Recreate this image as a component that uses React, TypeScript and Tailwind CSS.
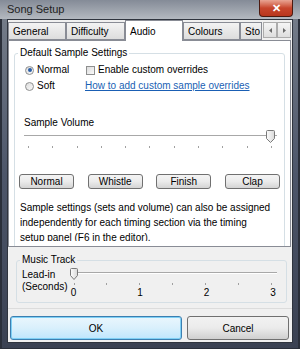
import React from 'react';

const Thumb = ({ w = 9, h = 13 }: { w?: number; h?: number }) => (
  <svg width={w} height={h} viewBox={`0 0 ${w} ${h}`}>
    <defs>
      <linearGradient id="thumbFill" x1="0" y1="0" x2="1" y2="0">
        <stop offset="0" stopColor="#fdfdfd" />
        <stop offset="1" stopColor="#d8d8d8" />
      </linearGradient>
    </defs>
    <path
      d={`M1.5 0.5H${w - 1.5}Q${w - 0.5} 0.5 ${w - 0.5} 1.5V${h - 4.5}L${w / 2} ${h - 0.5}L0.5 ${h - 4.5}V1.5Q0.5 0.5 1.5 0.5Z`}
      fill="url(#thumbFill)"
      stroke="#7a7a7a"
    />
  </svg>
);

const SmallButton = ({ label }: { label: string }) => (
  <button className="h-[15px] w-[55px] rounded-[3px] border border-[#707070] bg-gradient-to-b from-[#f4f4f4] via-[#ebebeb] to-[#d4d4d4] text-[10px] leading-none text-black">
    {label}
  </button>
);

const Radio = ({ checked }: { checked?: boolean }) => (
  <span className="flex h-[9px] w-[9px] items-center justify-center rounded-full border border-[#8e8f8f] bg-gradient-to-br from-[#dcdcdc] to-[#fafafa]">
    {checked && <span className="h-[4px] w-[4px] rounded-full bg-[#2b5fa8]" />}
  </span>
);

const tabs = [
  { label: 'General', w: 'w-[58px]' },
  { label: 'Difficulty', w: 'w-[59px]' },
  { label: 'Audio', w: 'w-[58px]', active: true },
  { label: 'Colours', w: 'w-[57px]' },
  { label: 'Sto', w: 'w-[22px]' },
];

export default function App() {
  return (
    <div className="flex h-[349px] w-[300px] flex-col overflow-hidden bg-gradient-to-b from-[#78808c] via-[#4d566a] to-[#3a4152] font-['Liberation_Sans',Arial,sans-serif] text-black shadow-[inset_2px_0_0_#2a2f3a,inset_-2px_0_0_#2a2f3a,inset_0_-1px_0_#2a2f3a]">
      {/* title bar */}
      <div className="flex h-[19px] shrink-0 items-start justify-between bg-gradient-to-b from-[#848b97] to-[#b4b9c0]">
        <span className="pl-[7px] pt-[4px] text-[11px] leading-none text-[#1e1e1e]">Song Setup</span>
        <div className="mr-[7px] flex h-[17px] w-[34px] items-center justify-center rounded-b-[4px] border border-t-0 border-[#4c1a10] bg-gradient-to-b from-[#e8a493] via-[#c7452c] to-[#b8361d] text-[11px] font-bold leading-none text-white">
          ✕
        </div>
      </div>

      {/* client area */}
      <div className="mx-[7px] mb-[6px] flex flex-1 flex-col border border-[#2f343e] bg-[#f0f0f0]">
        {/* tab strip */}
        <div className="flex h-[20px] items-end">
          {tabs.map((t) =>
            t.active ? (
              <div
                key={t.label}
                className={`${t.w} relative z-10 -mb-px flex h-[21px] items-center border border-b-0 border-[#898c95] bg-white pl-[4px] text-[10px]`}
              >
                {t.label}
              </div>
            ) : (
              <div
                key={t.label}
                className={`${t.w} flex h-[18px] items-center border border-[#898c95] bg-gradient-to-b from-[#f3f3f3] to-[#dddddd] pl-[4px] text-[10px]`}
              >
                {t.label}
              </div>
            )
          )}
          <div className="ml-[1px] flex h-[16px] self-center">
            {['M4 1L1 3.5L4 6Z', 'M1 1L4 3.5L1 6Z'].map((d) => (
              <div
                key={d}
                className="flex w-[14px] items-center justify-center border border-[#acacac] bg-gradient-to-b from-[#f5f5f5] to-[#dedede]"
              >
                <svg width="5" height="7" viewBox="0 0 5 7">
                  <path d={d} fill="#6a6a6a" />
                </svg>
              </div>
            ))}
          </div>
        </div>

        {/* tab page */}
        <div className="mr-[1px] h-[207px] overflow-hidden border border-[#898c95] bg-white">
          <fieldset className="ml-[5px] mr-[5px] mt-[5px] rounded-[3px] border border-[#d5dfe5] pb-[12px]">
            <legend className="ml-[3px] px-[2px] text-[10px] leading-[14px]">Default Sample Settings</legend>

            <div className="mt-[4px] grid grid-cols-[61px_1fr] gap-y-[4px] pl-[10px] text-[10px] leading-[12px]">
              <div className="flex items-center gap-[3px]">
                <Radio checked />
                <span>Normal</span>
              </div>
              <div className="flex items-center gap-[3px]">
                <span className="h-[9px] w-[9px] border border-[#8e8f8f] bg-gradient-to-br from-[#dcdcdc] to-[#fafafa]" />
                <span>Enable custom overrides</span>
              </div>
              <div className="flex items-center gap-[3px]">
                <Radio />
                <span>Soft</span>
              </div>
              <span className="-ml-px text-[#1a5fb4] underline">How to add custom sample overrides</span>
            </div>

            <div className="mt-[25px] pl-[9px] text-[10px] leading-[12px]">Sample Volume</div>

            <div className="ml-[9px] mr-[7px] mt-[1px]">
              <div className="relative h-[13px]">
                <div className="absolute left-0 right-0 top-[5px] h-[2px] border-t border-[#a8a8a8] border-b border-b-white" />
                <div className="absolute right-[2px] top-0">
                  <Thumb />
                </div>
              </div>
              <div className="mt-[3px] flex justify-between pl-[4px] pr-[5px]">
                {Array.from({ length: 11 }).map((_, i) => (
                  <span key={i} className="h-[2px] w-px bg-[#a0a0a0]" />
                ))}
              </div>
            </div>

            <div className="mt-[26px] flex justify-between pl-[4px] pr-[4px]">
              <SmallButton label="Normal" />
              <SmallButton label="Whistle" />
              <SmallButton label="Finish" />
              <SmallButton label="Clap" />
            </div>

            <p className="mt-[11px] h-[41px] overflow-hidden pl-[5px] text-[10px] leading-[15px]">
              Sample settings (sets and volume) can also be assigned
              <br />
              independently for each timing section via the timing
              <br />
              setup panel (F6 in the editor).
            </p>
          </fieldset>
        </div>

        {/* music track */}
        <fieldset className="ml-[8px] mr-[5px] mt-[7px] rounded-[3px] border border-[#d5dfe5] pb-[3px]">
          <legend className="ml-[3px] px-[2px] text-[10px] leading-[12px]">Music Track</legend>
          <div className="flex">
            <div className="pl-[5px] pt-[3px] text-[10px] leading-[12px]">
              Lead-in
              <br />
              (Seconds)
            </div>
            <div className="ml-[2px] mt-[2px] flex-1 pr-[9px]">
              <div className="relative h-[12px]">
                <div className="absolute left-[7px] right-0 top-[4px] h-[2px] border-t border-[#a8a8a8] border-b border-b-white" />
                <div className="absolute left-0 top-0">
                  <Thumb w={8} h={12} />
                </div>
              </div>
              <div className="mt-[3px] flex justify-between pl-[4px] pr-[5px]">
                {Array.from({ length: 7 }).map((_, i) => (
                  <span key={i} className="h-[2px] w-px bg-[#a0a0a0]" />
                ))}
              </div>
              <div className="mt-[2px] flex justify-between text-[10px] leading-[12px]">
                {['0', '1', '2', '3'].map((n) => (
                  <span key={n} className="w-[8px] text-center">
                    {n}
                  </span>
                ))}
              </div>
            </div>
          </div>
        </fieldset>

        {/* dialog buttons */}
        <div className="mt-[5px] border-t border-[#dcdcdc] shadow-[inset_0_1px_0_#ffffff]" />
        <div className="mt-[7px] flex gap-[5px] pl-[2px] pr-[3px]">
          <button className="h-[24px] w-[172px] rounded-[3px] border border-[#3c7fb1] bg-gradient-to-b from-[#eaf6fd] via-[#d9f0fc] to-[#bee6fd] text-[10px] shadow-[inset_0_0_0_1px_#7fd0f5]">
            OK
          </button>
          <button className="h-[24px] flex-1 rounded-[3px] border border-[#707070] bg-gradient-to-b from-[#f2f2f2] via-[#ebebeb] to-[#cfcfcf] text-[10px]">
            Cancel
          </button>
        </div>
      </div>
    </div>
  );
}
